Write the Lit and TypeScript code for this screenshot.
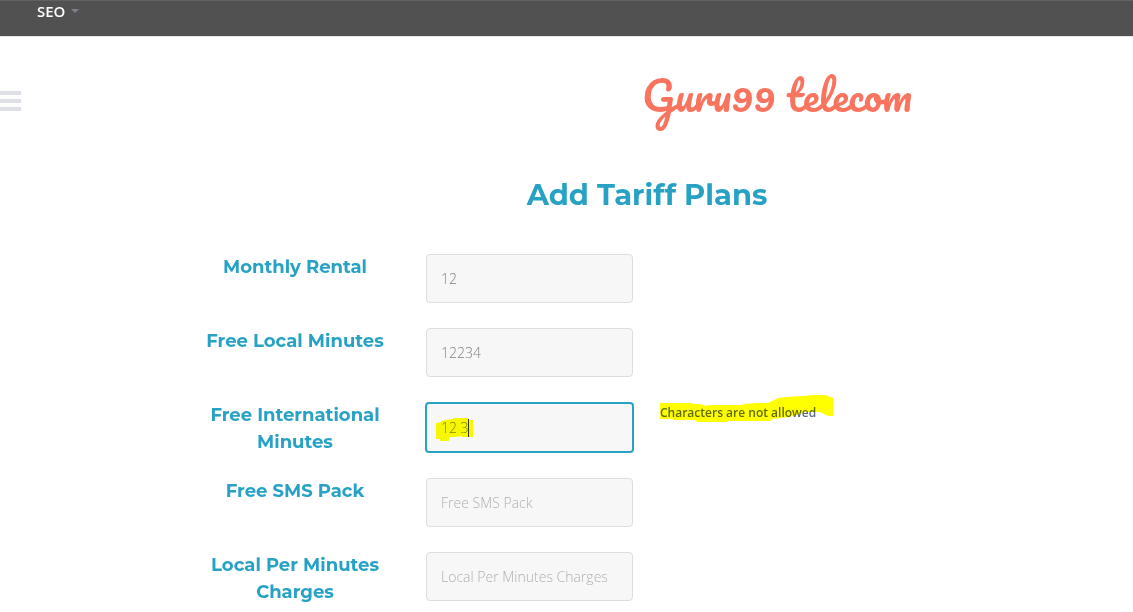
import { LitElement, html, css, nothing } from "lit";
import { customElement } from "lit/decorators.js";
import { classMap } from "lit/directives/class-map.js";

interface Field {
  id: string;
  label: string;
  value: string;
  active?: boolean;
  message?: string;
}

const FIELDS: Field[] = [
  { id: "rental", label: "Monthly Rental", value: "12" },
  { id: "local", label: "Free Local Minutes", value: "12234" },
  {
    id: "international",
    label: "Free International Minutes",
    value: "12 3",
    active: true,
    message: "Characters are not allowed",
  },
  { id: "sms", label: "Free SMS Pack", value: "" },
  { id: "charges", label: "Local Per Minutes Charges", value: "" },
];

@customElement("app-root")
export class AppRoot extends LitElement {
  static styles = css`
    :host {
      display: block;
      height: 100vh;
      overflow: hidden;
      background: #fff;
      color: #5f6b7a;
      font-family: "Open Sans", sans-serif;
    }
    * {
      box-sizing: border-box;
    }
    .bar {
      display: flex;
      align-items: flex-start;
      height: 37px;
      padding: 0 37px;
      background: #515151;
      border-top: 1px solid #5f6165;
      border-bottom: 1px solid #e6e6e6;
    }
    .seo {
      display: flex;
      align-items: center;
      gap: 6px;
      color: #fff;
      font-size: 15px;
      line-height: 20px;
      font-weight: 600;
      text-decoration: none;
    }
    .caret {
      width: 8px;
      height: 4px;
      fill: #7b8289;
    }
    .head {
      display: flex;
      align-items: flex-start;
      height: 133px;
      padding-top: 29px;
    }
    .menu {
      display: flex;
      flex-direction: column;
      gap: 4px;
      width: 21px;
      margin-top: 25px;
      padding: 0;
      border: 0;
      background: none;
    }
    .line {
      height: 4px;
      width: 100%;
      background: #dde0e4;
    }
    .logo {
      flex: 1;
      padding-left: 400px;
      text-align: center;
      color: #f9745f;
      font-family: Pacifico, cursive;
      font-size: 41px;
      line-height: 58px;
      font-weight: 400;
      text-decoration: none;
    }
    .title {
      margin: 0;
      padding-left: 161px;
      text-align: center;
      color: #27a2c5;
      font-family: Montserrat, "Inter", sans-serif;
      font-size: 29px;
      line-height: 50px;
      font-weight: 700;
    }
    .form {
      padding: 34px 0 0 187px;
    }
    .row {
      display: grid;
      grid-template-columns: 216fr 253fr 477fr;
      align-items: start;
    }
    .label {
      padding: 0 16px;
      text-align: center;
      color: #27a2c5;
      font-family: Montserrat, "Inter", sans-serif;
      font-size: 18px;
      line-height: 27px;
      font-weight: 700;
    }
    .cell {
      position: relative;
      padding: 0 23px;
      margin-bottom: 25px;
    }
    .input {
      display: block;
      width: 100%;
      height: 49px;
      padding: 0 14px;
      border: 1px solid #dedede;
      border-radius: 4px;
      outline: none;
      background: #f7f7f7;
      color: #7f8482;
      font-family: "Open Sans", sans-serif;
      font-size: 14px;
      font-weight: 300;
    }
    .input::placeholder {
      color: #b0b0b0;
      opacity: 1;
    }
    .active .cell {
      padding: 0 22px;
    }
    .active .input {
      height: 51px;
      border: 2px solid #27a2c5;
    }
    .note {
      position: relative;
      padding-left: 4px;
      font-size: 12px;
      line-height: 22px;
      font-weight: 600;
    }
    .mark {
      position: absolute;
      fill: #ff0;
      mix-blend-mode: multiply;
      pointer-events: none;
    }
    .mark-value {
      left: 33px;
      top: 16px;
      width: 38px;
      height: 25px;
    }
    .mark-note {
      left: 4px;
      top: -7px;
      width: 174px;
      height: 28px;
    }
    .cursor {
      fill: #333;
    }
  `;

  private renderField(f: Field) {
    return html`
      <div class=${classMap({ row: true, active: !!f.active })}>
        <label class="label" for=${f.id}>${f.label}</label>
        <div class="cell">
          <input class="input" id=${f.id} type="text" .value=${f.value} placeholder=${f.label} />
          ${f.active
            ? html`<svg class="mark mark-value" viewBox="0 0 38 25" aria-hidden="true">
                <path d="M0 5 5 4 5 3 9 2 17 1 17 0H32V2H37V19H26V18L19 19H14V20H13V23H4V21H0Z" />
                <path class="cursor" d="M32 1h1v18h-1z" />
              </svg>`
            : nothing}
        </div>
        ${f.message
          ? html`<div class="note" role="alert">
              ${f.message}
              <svg class="mark mark-note" viewBox="0 0 174 28" aria-hidden="true">
                <path
                  d="M0 8H31L34 9H40L46 11 48 10H82L84 9 97 8 108 8 112 6 118 3 127 2 143 1 154 0H165L173 3V21H168L160 17H150L145 17 139 19 130 22 112 24 110 26 68 26 67 27H38L35 25 14 25 12 24H0Z"
                />
              </svg>
            </div>`
          : nothing}
      </div>
    `;
  }

  render() {
    return html`
      <nav class="bar">
        <a class="seo" href="#"
          >SEO<svg class="caret" viewBox="0 0 8 4" aria-hidden="true"><path d="M0 0h8L4 4z" /></svg
        ></a>
      </nav>
      <header class="head">
        <button class="menu" type="button" aria-label="Menu">
          <span class="line"></span><span class="line"></span><span class="line"></span>
        </button>
        <a class="logo" href="#">Guru99 telecom</a>
      </header>
      <main>
        <h1 class="title">Add Tariff Plans</h1>
        <form class="form">${FIELDS.map((f) => this.renderField(f))}</form>
      </main>
    `;
  }
}
